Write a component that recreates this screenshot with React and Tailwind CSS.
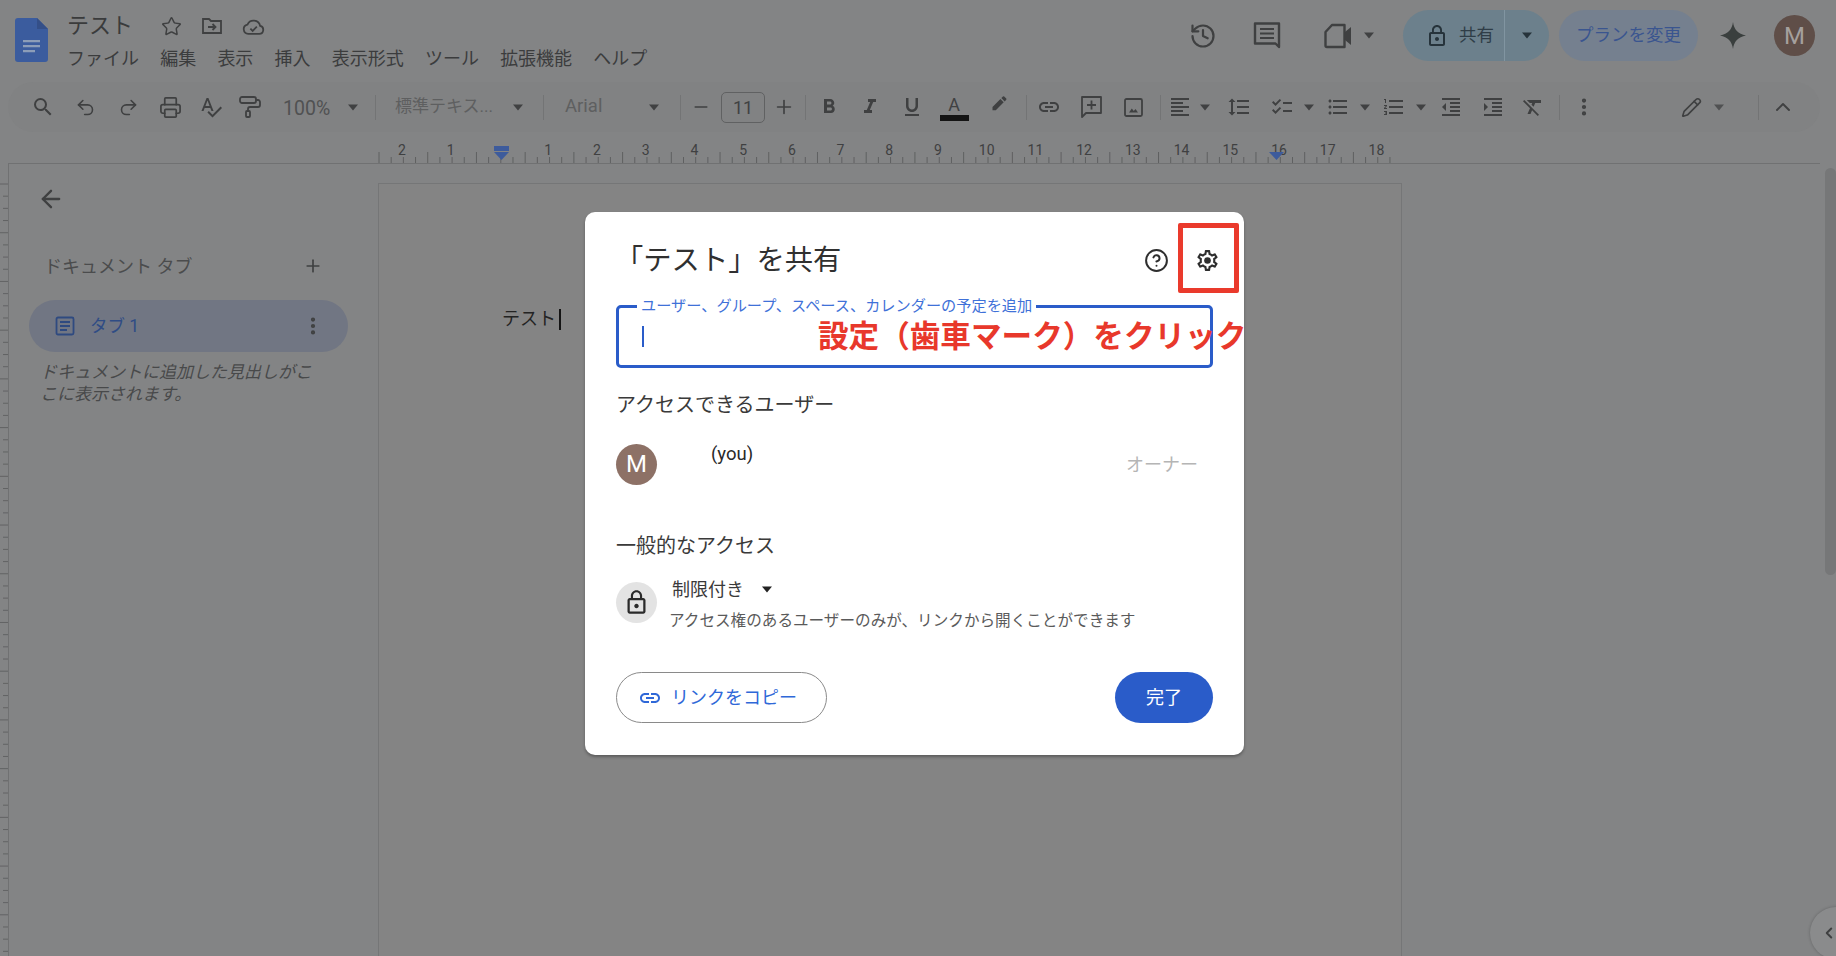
import React from "react";
import { ArrowLeft, Plus, Minus, EllipsisVertical, Star, History, Printer, PaintRoller, Undo2, Redo2, Pencil, ChevronUp, ChevronLeft, CircleHelp } from "lucide-react";

const ink = "#3f4041";
const LOCK = "M12 17c1.1 0 2-.9 2-2s-.9-2-2-2-2 .9-2 2 .9 2 2 2zm6-9h-1V6c0-2.76-2.24-5-5-5S7 3.24 7 6v2H6c-1.1 0-2 .9-2 2v10c0 1.1.9 2 2 2h12c1.1 0 2-.9 2-2V10c0-1.1-.9-2-2-2zM8.9 6c0-1.71 1.39-3.1 3.1-3.1s3.1 1.39 3.1 3.1v2H8.9V6zM18 20H6V10h12v10z";
const LINK = "M3.9 12c0-1.71 1.39-3.1 3.1-3.1h4V7H7c-2.76 0-5 2.24-5 5s2.24 5 5 5h4v-1.9H7c-1.71 0-3.1-1.39-3.1-3.1zM8 13h8v-2H8v2zm9-6h-4v1.9h4c1.71 0 3.1 1.39 3.1 3.1s-1.39 3.1-3.1 3.1h-4V17h4c2.76 0 5-2.24 5-5s-2.24-5-5-5z";
const GEAR = "M19.43 12.98c.04-.32.07-.64.07-.98 0-.34-.03-.66-.07-.98l2.11-1.65c.19-.15.24-.42.12-.64l-2-3.46a.5.5 0 0 0-.61-.22l-2.49 1c-.52-.4-1.08-.73-1.69-.98l-.38-2.65A.488.488 0 0 0 14 2h-4c-.25 0-.46.18-.49.42l-.38 2.65c-.61.25-1.17.59-1.69.98l-2.49-1a.566.566 0 0 0-.18-.03c-.17 0-.34.09-.43.25l-2 3.46c-.13.22-.07.49.12.64l2.11 1.65c-.04.32-.07.65-.07.98 0 .33.03.66.07.98l-2.11 1.65c-.19.15-.24.42-.12.64l2 3.46a.5.5 0 0 0 .61.22l2.49-1c.52.4 1.08.73 1.69.98l.38 2.65c.03.24.24.42.49.42h4c.25 0 .46-.18.49-.42l.38-2.65c.61-.25 1.17-.59 1.69-.98l2.49 1c.06.02.12.03.18.03.17 0 .34-.09.43-.25l2-3.46c.12-.22.07-.49-.12-.64l-2.11-1.65zm-1.98-1.71c.04.31.05.52.05.73 0 .21-.02.43-.05.73l-.14 1.13.89.7 1.08.84-.7 1.21-1.27-.51-1.04-.42-.9.68c-.43.32-.84.56-1.25.73l-1.06.43-.16 1.13-.2 1.35h-1.4l-.19-1.35-.16-1.13-1.06-.43c-.43-.18-.83-.41-1.23-.71l-.91-.7-1.06.43-1.27.51-.7-1.21 1.08-.84.89-.7-.14-1.13c-.03-.31-.05-.54-.05-.74s.02-.43.05-.73l.14-1.13-.89-.7-1.08-.84.7-1.21 1.27.51 1.04.42.9-.68c.43-.32.84-.56 1.25-.73l1.06-.43.16-1.13.2-1.35h1.39l.19 1.35.16 1.13 1.06.43c.43.18.83.41 1.23.71l.91.7 1.06-.43 1.27-.51.7 1.21-1.07.85-.89.7.14 1.13z";

function G({ size = 24, color = ink, d, children, className = "" }) {
  return <svg width={size} height={size} viewBox="0 0 24 24" fill={color} className={className}>{d ? <path d={d} /> : children}</svg>;
}
const Caret = ({ color = "#404142" }) => (
  <svg width="12" height="7" viewBox="0 0 12 7" fill={color}><path d="M1 .5h10L6 6.5z" /></svg>
);
const Sep = () => <div className="w-px h-[25px] bg-[#737475] shrink-0" />;
const Slot = ({ className = "", children }) => (
  <div className={"flex items-center justify-center shrink-0 " + className}>{children}</div>
);

function DocsLogo() {
  return (
    <svg width="33" height="44" viewBox="0 0 33 44">
      <path d="M3 0h19l11 11v30a3 3 0 0 1-3 3H3a3 3 0 0 1-3-3V3a3 3 0 0 1 3-3z" fill="#3b5c9e" />
      <path d="M22 0l11 11H22z" fill="#344f88" />
      <path d="M8 22h17v2.2H8zM8 27h17v2.2H8zM8 32h12v2.2H8z" fill="#8c9db8" />
    </svg>
  );
}

function Menu() {
  const items = ["ファイル", "編集", "表示", "挿入", "表示形式", "ツール", "拡張機能", "ヘルプ"];
  return (
    <div className="flex gap-[21.2px] text-[18px] leading-[24px] text-[#3b3c3d]">
      {items.map((t) => <span key={t}>{t}</span>)}
    </div>
  );
}

function Header() {
  return (
    <header className="flex items-start h-[82px] shrink-0">
      <div className="ml-[15px] mt-[18px] shrink-0"><DocsLogo /></div>
      <div className="ml-[19px] mt-[10px]">
        <div className="flex items-center h-[32px]">
          <span className="text-[22px] leading-[32px] text-[#3a3b3c]">テスト</span>
          <Slot className="ml-[24px] w-[28px]"><Star size={21} color={ink} strokeWidth={1.7} /></Slot>
          <Slot className="ml-[13px] w-[28px]">
            <svg width="24" height="24" viewBox="0 0 24 24" fill="none" stroke={ink} strokeWidth="1.8">
              <path d="M3 5h6l2 2h10v12H3z" /><path d="M8 13h7M12.5 10l3 3-3 3" />
            </svg>
          </Slot>
          <Slot className="ml-[13px] w-[28px]">
            <svg width="25" height="25" viewBox="0 0 24 24" fill="none" stroke={ink} strokeWidth="1.7">
              <path d="M7 19a4.5 4.5 0 0 1-.8-8.9 6.5 6.5 0 0 1 12.2 1.4A3.8 3.8 0 0 1 17.5 19z" /><path d="M9 14l2.2 2.2 4-4" />
            </svg>
          </Slot>
        </div>
        <div className="mt-[5px]"><Menu /></div>
      </div>
      <div className="ml-auto mr-[21px] mt-[10px] flex items-center h-[51px]">
        <Slot className="w-[40px]"><History size={28} color={ink} strokeWidth={1.9} /></Slot>
        <Slot className="ml-[24px] w-[40px]">
          <svg width="28" height="30" viewBox="0 0 28 30" fill="none" stroke={ink} strokeWidth="2.4">
            <path d="M2 2.5h24V26l-3.5-3.5H2z" strokeLinejoin="round" /><path d="M7 8h14M7 12.5h14M7 17h14" strokeWidth="2" />
          </svg>
        </Slot>
        <Slot className="ml-[31px] w-[40px]">
          <svg width="28" height="26" viewBox="0 0 28 26" fill="none" stroke={ink} strokeWidth="2.4">
            <path d="M8 2h12.5v22H3a1.5 1.5 0 0 1-1.5-1.5V9z" strokeLinejoin="round" /><path d="M21 9l6-5v18l-6-5z" fill={ink} stroke="none" />
          </svg>
        </Slot>
        <Slot className="w-[22px]"><Caret color="#404142" /></Slot>
        <div className="ml-[23px] flex w-[146px] h-[51px] rounded-full overflow-hidden bg-[#6c808c] text-[#2f3d47]">
          <div className="flex items-center pl-[22px] w-[102px] border-r border-[#8195a1]">
            <G size={24} color="#26333b" d={LOCK} />
            <span className="ml-[10px] text-[17.5px]">共有</span>
          </div>
          <Slot className="flex-1"><Caret color="#26333b" /></Slot>
        </div>
        <div className="ml-[10px] w-[139px] h-[51px] rounded-full bg-[#75808f] flex items-center justify-center text-[17.5px] text-[#3a558f]">プランを変更</div>
        <Slot className="ml-[15px] w-[40px]">
          <svg width="26" height="27" viewBox="0 0 26 27" fill="#3a3f3e"><path d="M13 0c1 7.5 5 12 13 13.5C18 15 14 19.5 13 27 12 19.5 8 15 0 13.5 8 12 12 7.5 13 0z" /></svg>
        </Slot>
        <div className="ml-[21px] w-[41px] h-[41px] rounded-full bg-[#5f4e48] flex items-center justify-center text-[24px] text-[#a5a09d]">M</div>
      </div>
    </header>
  );
}

function Toolbar() {
  const s = { color: ink, strokeWidth: 1.8 };
  return (
    <div className="flex items-center w-[1812px] ml-[8px] h-[50px] shrink-0 rounded-full bg-[#818283] pl-[14px] text-[#5e5f60]">
      <Slot className="w-[42px]"><G size={24} d="M15.5 14h-.79l-.28-.27A6.471 6.471 0 0 0 16 9.5 6.5 6.5 0 1 0 9.5 16c1.61 0 3.09-.59 4.23-1.57l.27.28v.79l5 4.99L20.49 19l-4.99-5zm-6 0C7.01 14 5 11.99 5 9.5S7.01 5 9.5 5 14 7.01 14 9.5 11.99 14 9.5 14z" /></Slot>
      <Slot className="w-[43px]"><Undo2 size={21} {...s} /></Slot>
      <Slot className="w-[42px]"><Redo2 size={21} {...s} /></Slot>
      <Slot className="w-[42px]"><Printer size={23} {...s} /></Slot>
      <Slot className="w-[40px]"><G size={24} d="M12.45 16h2.09L9.43 3H7.57L2.46 16h2.09l1.12-3h5.64l1.14 3zm-6.02-5L8.5 5.48 10.57 11H6.43zm15.16.59l-8.09 8.09L9.83 16l-1.41 1.41 5.09 5.09L23 13l-1.41-1.41z" /></Slot>
      <Slot className="w-[38px]"><PaintRoller size={24} {...s} /></Slot>
      <span className="ml-[14px] mt-[3px] w-[48px] text-[19.5px] text-[#505152] shrink-0 whitespace-nowrap">100%</span>
      <Slot className="w-[44px]"><Caret /></Slot>
      <Sep />
      <span className="ml-[19px] w-[102px] text-[17px] whitespace-nowrap shrink-0">標準テキス...</span>
      <Slot className="w-[42px]"><Caret /></Slot>
      <div className="ml-[4px]"><Sep /></div>
      <span className="ml-[21px] w-[79px] text-[18.5px] shrink-0">Arial</span>
      <Slot className="w-[20px]"><Caret /></Slot>
      <div className="ml-[16px]"><Sep /></div>
      <Slot className="w-[40px]"><Minus size={20} {...s} /></Slot>
      <div className="w-[44px] h-[31px] shrink-0 rounded-[5px] border-[1.5px] border-[#606162] flex items-center justify-center text-[18px] text-[#404142]">11</div>
      <Slot className="w-[38px]"><Plus size={22} {...s} /></Slot>
      <div className="ml-[2px]"><Sep /></div>
      <Slot className="w-[46px]"><G size={24} d="M15.6 10.79c.97-.67 1.65-1.77 1.65-2.79 0-2.26-1.75-4-4-4H7v14h7.04c2.09 0 3.71-1.7 3.71-3.79 0-1.52-.86-2.82-2.15-3.42zM10 6.5h3c.83 0 1.5.67 1.5 1.5s-.67 1.5-1.5 1.5h-3v-3zm3.5 9H10v-3h3.5c.83 0 1.5.67 1.5 1.5s-.67 1.5-1.5 1.5z" /></Slot>
      <Slot className="w-[36px]"><G size={24} d="M10 4v3h2.21l-3.42 8H6v3h8v-3h-2.21l3.42-8H18V4z" /></Slot>
      <Slot className="w-[48px]"><G size={24} d="M12 17c3.31 0 6-2.69 6-6V3h-2.5v8c0 1.93-1.57 3.5-3.5 3.5S8.5 12.93 8.5 11V3H6v8c0 3.31 2.69 6 6 6zm-7 2v2h14v-2H5z" /></Slot>
      <Slot className="w-[36px]">
        <div className="flex flex-col items-center w-[29px]">
          <span className="text-[18px] leading-[21px] text-[#404142]">A</span>
          <div className="w-[29px] h-[6px] bg-[#141414]" />
        </div>
      </Slot>
      <Slot className="w-[54px]">
        <svg width="21" height="24" viewBox="0 0 24 24" fill={ink} className="-mt-[5px]"><path d="M13.06 5.19l3.75 3.75L7.75 18H4v-3.75l9.06-9.06zm4.82 2.68-3.75-3.75 1.83-1.83a.996.996 0 0 1 1.41 0l2.34 2.34c.39.39.39 1.02 0 1.41l-1.83 1.83z" /></svg>
      </Slot>
      <Sep />
      <Slot className="w-[44px]"><G size={24} d={LINK} /></Slot>
      <Slot className="w-[40px]">
        <svg width="21" height="22" viewBox="0 0 21 22" fill="none" stroke={ink} strokeWidth="1.8"><path d="M1 1h19v16H5l-4 4z" strokeLinejoin="round" /><path d="M10.5 4.5v9M6 9h9" /></svg>
      </Slot>
      <Slot className="w-[44px]">
        <svg width="19" height="19" viewBox="0 0 19 19" fill="none" stroke={ink} strokeWidth="1.8"><rect x="1" y="1" width="17" height="17" rx="1.5" /><path d="M5 14.5l2.8-4 2 2.5 1.7-2 2.5 3.5z" fill={ink} stroke="none" /></svg>
      </Slot>
      <div className="ml-[5px]"><Sep /></div>
      <Slot className="w-[38px]"><G size={24} d="M15 15H3v2h12v-2zm0-8H3v2h12V7zM3 13h18v-2H3v2zm0 8h18v-2H3v2zM3 3v2h18V3H3z" /></Slot>
      <Slot className="w-[12px]"><Caret /></Slot>
      <Slot className="w-[56px]"><G size={24} d="M6 7h2.5L5 3.5 1.5 7H4v10H1.5L5 20.5 8.5 17H6V7zm4-2v2h12V5H10zm0 14h12v-2H10v2zm0-6h12v-2H10v2z" /></Slot>
      <Slot className="w-[30px]"><G size={24} d="M22 7h-9v2h9V7zm0 8h-9v2h9v-2zM5.54 11 2 7.46l1.41-1.41 2.12 2.12 4.24-4.24 1.41 1.41L5.54 11zm0 8L2 15.46l1.41-1.41 2.12 2.12 4.24-4.24 1.41 1.41L5.54 19z" /></Slot>
      <Slot className="w-[24px]"><Caret /></Slot>
      <Slot className="w-[34px]"><G size={24} d="M4 10.5c-.83 0-1.5.67-1.5 1.5s.67 1.5 1.5 1.5 1.5-.67 1.5-1.5-.67-1.5-1.5-1.5zm0-6c-.83 0-1.5.67-1.5 1.5S3.17 7.5 4 7.5 5.5 6.83 5.5 6 4.83 4.5 4 4.5zm0 12c-.83 0-1.5.68-1.5 1.5s.68 1.5 1.5 1.5 1.5-.68 1.5-1.5-.67-1.5-1.5-1.5zM7 19h14v-2H7v2zm0-6h14v-2H7v2zm0-8v2h14V5H7z" /></Slot>
      <Slot className="w-[20px]"><Caret /></Slot>
      <Slot className="w-[38px]"><G size={24} d="M2 17h2v.5H3v1h1v.5H2v1h3v-4H2v1zm1-9h1V4H2v1h1v3zm-1 3h1.8L2 13.1v.9h3v-1H3.2L5 10.9V10H2v1zm5-6v2h14V5H7zm0 14h14v-2H7v2zm0-6h14v-2H7v2z" /></Slot>
      <Slot className="w-[16px]"><Caret /></Slot>
      <Slot className="w-[44px]"><G size={24} d="M11 17h10v-2H11v2zm-8-5l4 4V8l-4 4zm0 9h18v-2H3v2zM3 3v2h18V3H3zm8 6h10V7H11v2zm0 4h10v-2H11v2z" /></Slot>
      <Slot className="w-[40px]"><G size={24} d="M3 21h18v-2H3v2zM3 8v8l4-4-4-4zm8 9h10v-2H11v2zM3 3v2h18V3H3zm8 6h10V7H11v2zm0 4h10v-2H11v2z" /></Slot>
      <Slot className="w-[40px]"><G size={24} d="M6 5v.18L8.82 8h2.4l-.72 1.68 2.1 2.1L14.21 8H20V5H6zM3.27 5 2 6.27l6.97 6.97L6.5 19h3l1.57-3.66L16.73 21 18 19.73 3.27 5z" /></Slot>
      <div className="ml-[6px]"><Sep /></div>
      <Slot className="w-[48px]"><EllipsisVertical size={22} color={ink} strokeWidth={2.6} /></Slot>
      <Slot className="ml-[65px] w-[36px]"><Pencil size={21} color={ink} strokeWidth={1.9} /></Slot>
      <Slot className="w-[20px]"><Caret color="#505152" /></Slot>
      <div className="ml-[29px]"><Sep /></div>
      <Slot className="w-[48px]"><ChevronUp size={24} color={ink} strokeWidth={1.9} /></Slot>
    </div>
  );
}

function Ruler() {
  const step = 48.72 / 4;
  const zero = 501;
  const ticks = [];
  for (let i = 0; i * step <= 1022; i++) {
    const x = 379 + i * step;
    ticks.push(<line key={i} x1={x} x2={x} y1={i % 4 === 0 ? 152 : 157} y2="163" stroke="#5f6061" strokeWidth="1" />);
  }
  const nums = [];
  for (let n = -2; n <= 18; n++) {
    if (n === 0) continue;
    nums.push(<text key={n} x={zero + n * 48.72 - 1.5} y="155" textAnchor="middle" fontSize="14" fill="#3f4041" fontFamily="Roboto, sans-serif">{Math.abs(n)}</text>);
  }
  return (
    <svg width="1820" height="31" viewBox="0 132 1820 31" className="block shrink-0">
      {ticks}
      {nums}
      <rect x="494" y="146" width="15" height="5" fill="#3d5b9c" />
      <path d="M494 152h15l-7.5 8z M1269 152h15l-7.5 8z" fill="#3d5b9c" />
    </svg>
  );
}

function VRuler() {
  const ys = [];
  for (let i = 0; i < 64; i++) ys.push(<line key={i} x1={i % 4 === 0 ? 0 : 3} x2="8" y1={21 + i * 12.18} y2={21 + i * 12.18} stroke="#626364" />);
  return <svg width="8" height="793" className="block shrink-0">{ys}</svg>;
}

function Sidebar() {
  return (
    <aside className="w-[369px] shrink-0 h-full">
      <div className="pl-[28px] pt-[21px]"><ArrowLeft size={28} color="#3f4041" strokeWidth={2} /></div>
      <div className="mt-[41px] pl-[35px] pr-[55px] flex items-center justify-between h-[24px]">
        <span className="text-[18px] text-[#4b4c4d] whitespace-nowrap">ドキュメント タブ</span>
        <Plus size={20} color="#3f4041" strokeWidth={2} />
      </div>
      <div className="mt-[22px] ml-[20px] w-[319px] h-[52px] rounded-full bg-[#717683] flex items-center pl-[26px] pr-[24px]">
        <svg width="20" height="20" viewBox="0 0 20 20" fill="none" stroke="#2f4a80" strokeWidth="1.8"><rect x="1.5" y="1.5" width="17" height="17" rx="1.5" /><path d="M5 6h10M5 10h10M5 14h7" /></svg>
        <span className="ml-[15px] text-[17.5px] text-[#2f4c85]">タブ 1</span>
        <div className="ml-auto"><EllipsisVertical size={22} color="#3f4041" strokeWidth={2.6} /></div>
      </div>
      <p className="mt-[9px] ml-[31px] w-[285px] text-[17px] leading-[22px] italic text-[#48494a]">ドキュメントに追加した見出しがここに表示されます。</p>
    </aside>
  );
}

function ShareDialog() {
  return (
    <div className="absolute left-[585px] top-[212px] w-[659px] h-[543px] bg-white rounded-[10px] shadow-[0_2px_3px_rgba(0,0,0,0.3)] px-[31px] text-[#3a3a3a]">
      <div className="flex items-center h-[48px] mt-[24px]">
        <h2 className="text-[28.3px] font-normal text-[#303030] -ml-[1px] mt-[2px] whitespace-nowrap">「テスト」を共有</h2>
        <div className="ml-auto flex items-center gap-[26px]">
          <CircleHelp size={25} color="#2e2e2e" strokeWidth={1.9} />
          <svg width="25" height="25" viewBox="0 0 24 24" fill="#2e2e2e" className="mr-[-7px]"><path d={GEAR} /><circle cx="12" cy="12" r="3.2" /></svg>
        </div>
      </div>
      <div className="relative mt-[21px] h-[63px] rounded-[5px] border-[3px] border-[#2a5cc9] pl-[23px] flex items-center">
        <div className="w-[1.5px] h-[21px] bg-[#2a5cc9]" />
        <span className="absolute left-[18px] -top-[12px] bg-white px-[4px] text-[15.2px] leading-[20px] text-[#3f71d8] whitespace-nowrap">ユーザー、グループ、スペース、カレンダーの予定を追加</span>
      </div>
      <h3 className="mt-[23px] text-[20px] leading-[28px] font-normal">アクセスできるユーザー</h3>
      <div className="flex items-center mt-[24px] h-[42px]">
        <div className="w-[41px] h-[41px] rounded-full bg-[#8d7166] text-white text-[24px] flex items-center justify-center shrink-0">M</div>
        <span className="ml-[54px] -mt-[19px] text-[18.5px] text-[#2a2a2a]">(you)</span>
        <span className="ml-auto mr-[15px] text-[18px] text-[#b5b5b5]">オーナー</span>
      </div>
      <h3 className="mt-[47px] text-[20px] leading-[28px] font-normal">一般的なアクセス</h3>
      <div className="flex mt-[16px]">
        <div className="w-[41px] h-[41px] mt-[6px] rounded-full bg-[#e3e3e3] flex items-center justify-center shrink-0">
          <G size={27} color="#2a2a2a" d={LOCK} />
        </div>
        <div className="ml-[13px]">
          <div className="flex items-center ml-[2px] h-[26px]">
            <span className="text-[18px] text-[#3a3a3a]">制限付き</span>
            <span className="ml-[17px]"><Caret color="#222" /></span>
          </div>
          <p className="mt-[8px] -ml-[1px] text-[15.6px] leading-[22px] text-[#5a5a5a] whitespace-nowrap">アクセス権のあるユーザーのみが、リンクから開くことができます</p>
        </div>
      </div>
      <div className="flex justify-between mt-[40px]">
        <div className="w-[211px] h-[51px] rounded-full border-[1.5px] border-[#8a8a8a] flex items-center pl-[21px] text-[#2f68d8]">
          <G size={24} color="#2f68d8" d={LINK} />
          <span className="ml-[9px] text-[18px]">リンクをコピー</span>
        </div>
        <div className="w-[98px] h-[51px] rounded-full bg-[#2a5cc9] flex items-center justify-center text-white text-[18px]">完了</div>
      </div>
      <div className="absolute left-[593px] top-[11px] w-[61px] h-[70px] border-[5px] border-[#ea3a2c] rounded-[2px]" />
      <span className="absolute left-[233px] top-[103px] text-[30.6px] leading-[44px] font-bold text-[#e8382b] whitespace-nowrap">設定（歯車マーク）をクリック</span>
    </div>
  );
}

export default function App() {
  return (
    <div className="relative w-[1836px] h-[956px] overflow-hidden bg-[#838485] font-['Roboto','Noto_Sans_CJK_JP',sans-serif] flex flex-col">
      <Header />
      <Toolbar />
      <Ruler />
      <main className="flex flex-1 min-h-0">
        <VRuler />
        <div className="flex flex-1 w-0 border-l border-t border-[#707172] mr-[16px]">
          <Sidebar />
          <div className="mt-[19px] w-[1024px] h-[900px] bg-[#848484] border border-[#757677] pl-[123px] pt-[122px]">
            <div className="flex items-center h-[26px]">
              <span className="text-[18px] leading-[26px] text-[#232323]">テスト</span>
              <div className="w-[2px] h-[21px] bg-[#141414] ml-[3px]" />
            </div>
          </div>
        </div>
      </main>
      <div className="absolute right-0 top-[168px] w-[11px] h-[407px] rounded-full bg-[#767778]" />
      <div className="absolute -right-[26px] top-[907px] w-[52px] h-[52px] rounded-full bg-[#8a8b8c] shadow-[0_0_3px_rgba(0,0,0,0.25)] flex items-center pl-[10px]">
        <ChevronLeft size={18} color="#3f4041" strokeWidth={2.6} />
      </div>
      <ShareDialog />
    </div>
  );
}
